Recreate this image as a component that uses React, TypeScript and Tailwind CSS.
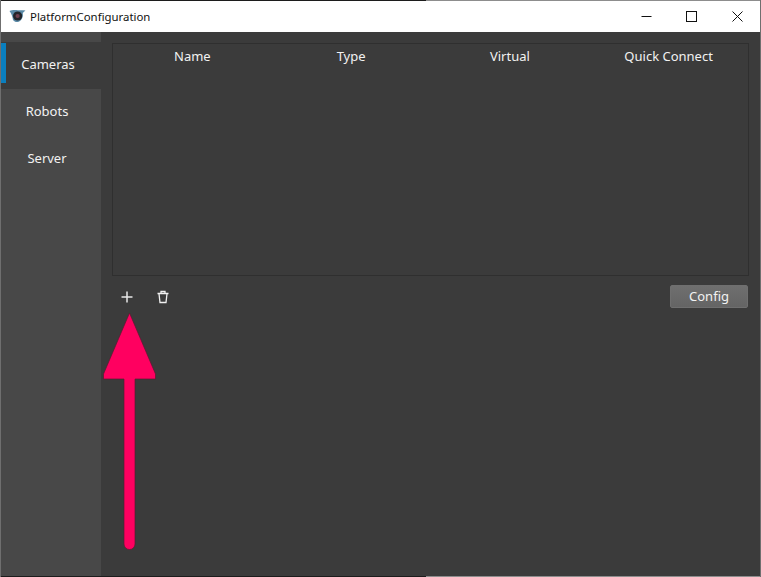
const columns = ["Name", "Type", "Virtual", "Quick Connect"];
const sideItems = ["Cameras", "Robots", "Server"];

function AppLogo() {
  return (
    <svg width="17" height="14" viewBox="0 0 17 14" className="shrink-0">
      <path d="M0.5 2 C3 0.8 6 1 9 1.2 C11.5 1.2 14 1 16.5 1.5 C15.5 2.5 14.5 3.2 13.8 4 C14.5 8 12.5 12 9 13 C7 13.4 5 12.5 4 11 C3.5 7.5 2.5 4.5 0.5 2 Z" fill="#5b8ba8" />
      <circle cx="8.6" cy="7" r="4.6" fill="#22252b" />
      <circle cx="8.6" cy="7" r="2.1" fill="#70404f" />
    </svg>
  );
}

function WindowButtons() {
  return (
    <div className="flex h-full items-center">
      <button className="flex h-full w-[46px] items-center justify-center">
        <svg width="11" height="11" viewBox="0 0 11 11"><path d="M0.5 5.5H10.5" stroke="#111" fill="none" /></svg>
      </button>
      <button className="flex h-full w-[45px] items-center justify-center">
        <svg width="11" height="11" viewBox="0 0 11 11"><rect x="0.5" y="0.5" width="10" height="10" stroke="#111" fill="none" /></svg>
      </button>
      <button className="flex h-full w-[46px] items-center justify-center">
        <svg width="11" height="11" viewBox="0 0 11 11"><path d="M0.5 0.5L10.5 10.5M10.5 0.5L0.5 10.5" stroke="#111" fill="none" /></svg>
      </button>
    </div>
  );
}

export default function App() {
  return (
    <div className="relative flex h-[577px] w-[761px] flex-col overflow-hidden border-x border-x-[#6f6f6f] bg-[#3b3b3b] font-['Noto_Sans','Open_Sans',sans-serif] text-[13px] text-[#f2f2f2]">
      {/* screen edge above the window */}
      <div className="flex h-px shrink-0">
        <div className="w-[425px] bg-[#1c1c1c]" />
        <div className="flex-1 bg-[#8d8d8d]" />
      </div>

      <div className="flex h-[31px] shrink-0 items-center justify-between bg-white pl-[8px] text-[11.4px] text-[#111]">
        <div className="flex items-center gap-[4px]">
          <AppLogo />
          <span>PlatformConfiguration</span>
        </div>
        <WindowButtons />
      </div>

      <div className="flex min-h-0 flex-1">
        <aside className="w-[100px] shrink-0 bg-[#484848] pt-[10px]">
          {sideItems.map((item, i) => (
            <div
              key={item}
              className={`flex h-[47px] items-center justify-center pb-[1px] ${i === 0 ? "relative bg-[#3b3b3b] pr-[6px]" : "pr-[8px]"}`}
            >
              {i === 0 && <span className="absolute left-0 top-px h-[40px] w-[5px] bg-[#0a7fbf]" />}
              {item}
            </div>
          ))}
        </aside>

        <main className="flex flex-1 flex-col pl-[11px] pr-[11px] pt-[11px]">
          <div className="h-[233px] border border-[#2f2f2f]">
            <div className="grid grid-cols-4 pt-[3px] leading-[18px]">
              {columns.map((col) => (
                <div key={col} className="text-center">{col}</div>
              ))}
            </div>
          </div>

          <div className="mt-[9px] flex items-center justify-between pr-px">
            <div className="flex items-center gap-[22px] pl-[8px]">
              <svg width="14" height="14" viewBox="0 0 14 14">
                <path d="M7 1.5V12.5M1.5 7H12.5" stroke="#e8e8e8" strokeWidth="1.5" fill="none" />
              </svg>
              <svg width="14" height="14" viewBox="0 0 14 14" fill="none" stroke="#f0f0f0" strokeWidth="1.3">
                <path d="M1.5 3.5H12.5M5 3.3V1.5H9V3.3M3 3.7L4 12.5H10L11 3.7" />
              </svg>
            </div>
            <button className="h-[23px] w-[78px] rounded-[2px] border border-[#6f6f6f] bg-gradient-to-b from-[#6f6f6f] to-[#646464] pt-px text-[13px] text-[#f2f2f2]">
              Config
            </button>
          </div>
        </main>
      </div>

      {/* bottom window edge */}
      <div className="flex h-px shrink-0">
        <div className="w-[425px] bg-[#1c1c1c]" />
        <div className="flex-1 bg-[#8d8d8d]" />
      </div>

      {/* annotation arrow over the screenshot */}
      <svg className="absolute left-[-1px] top-0" width="761" height="577" viewBox="0 0 761 577">
        <path
          d="M129.5 313 L155.5 374 V379 H135 V544 A5.5 5.5 0 0 1 124 544 V379 H103.5 V374 Z"
          fill="#ff0060"
          stroke="#5a1a30"
          strokeWidth="0.7"
        />
      </svg>
    </div>
  );
}
